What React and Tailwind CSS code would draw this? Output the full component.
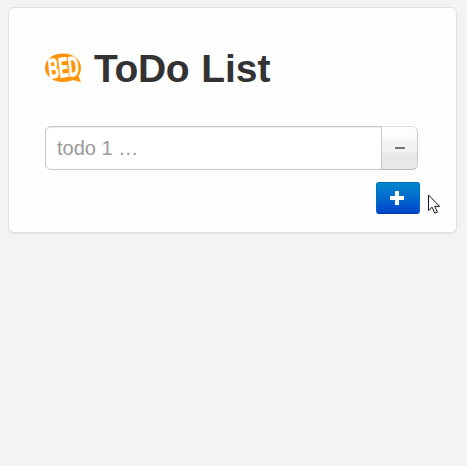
function Logo() {
  return (
    <svg width="38" height="32" viewBox="0 0 38 32" className="block shrink-0 overflow-visible">
      <path
        d="M18 .5C8 .5 0 6.500 0 14.700S8 29 18 29c3.800 0 7.200-.7 10-2l8 2.300-2.500-6.200c1.600-2.300 2.500-5.200 2.500-8.400C36 6.500 28 .5 18 .5Z"
        fill="#ff9408"
      />
      <g
        transform="rotate(-6 18 15)"
        fill="#fff"
        stroke="#fff"
        strokeWidth="0.8"
        fontSize="28"
        fontWeight="700"
        fontFamily="'Liberation Sans', Arial, sans-serif"
      >
        <text x="3.3" y="24" textLength="30.500" lengthAdjust="spacingAndGlyphs">
          BED
        </text>
      </g>
    </svg>
  );
}

function Cursor() {
  return (
    <svg width="14" height="21" viewBox="0 0 14 21" className="absolute left-[428px] top-[194px]">
      <path
        d="M.5 1v15.600l3.600-3.400 2.800 6 2.500-1.100-2.700-5.800h4.900Z"
        fill="#fff"
        stroke="#15152b"
        strokeWidth="1"
      />
    </svg>
  );
}

export default function App() {
  return (
    <main className="relative h-screen overflow-hidden bg-[#f3f3f3] pt-[7px] pl-2 font-['Liberation_Sans',Arial,sans-serif]">
      <section className="h-[226px] w-[449px] rounded-md border border-[#e1e1e1] bg-[#fefefe] px-9 pt-[38px] shadow-[0_1px_1px_rgba(0,0,0,0.05)]">
        <header className="flex h-[42px] items-center">
          <div className="mt-[3px] mr-[11px]">
            <Logo />
          </div>
          <h1 className="mt-[3px] flex gap-[12px] text-[39px] leading-[42px] font-bold text-[#333]">
            <span className="tracking-[-0.4px]">ToDo</span>
            <span>List</span>
          </h1>
        </header>
        <div className="mt-[38px] flex h-11">
          <input
            className="w-[337px] rounded-l-md border border-[#c8c8c8] bg-white px-[11px] text-[20px] shadow-[inset_0_1px_1px_rgba(0,0,0,0.075)] outline-none placeholder:text-[#999]"
            placeholder="todo 1 …"
          />
          <button
            aria-label="Remove"
            className="-ml-px flex w-[37px] items-center justify-center rounded-r-md border border-[#cdcdcd] border-t-[#dedede] border-b-[#bababa] bg-[linear-gradient(#fefefe_0,#fbfbfb_12px,#f3f3f3_13px,#f1f1f1_25px,#e9e9e9_26px,#e7e7e7_100%)]"
          >
            <span className="h-0.5 w-2.5 bg-[#777]" />
          </button>
        </div>
        <button
          aria-label="Add"
          className="mt-3 ml-[331px] flex h-8 w-11 items-center justify-center rounded-[3px] border border-[#006fbd] border-b-[#003ea8] bg-linear-to-b from-[#0088cc] to-[#0044cc]"
        >
          <svg width="14" height="14" viewBox="0 0 14 14" className="mr-0.5">
            <path d="M5 0h4v5h5v4H9v5H5V9H0V5h5Z" fill="#fff" />
          </svg>
        </button>
      </section>
      <Cursor />
    </main>
  );
}
